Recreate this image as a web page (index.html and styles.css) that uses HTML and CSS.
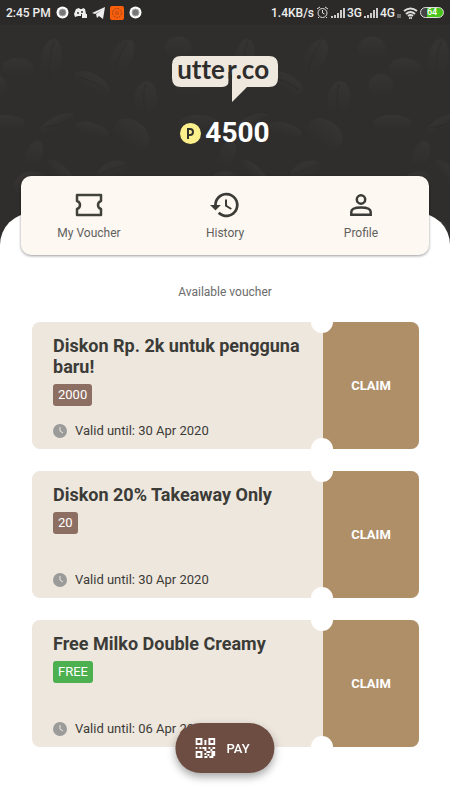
FILE: index.html
```
<!DOCTYPE html>
<html lang="id">
<head>
  <meta charset="UTF-8">
  <meta name="viewport" content="width=device-width, initial-scale=1.0">
  <title>utter.co</title>
  <link rel="stylesheet" href="styles.css">
</head>
<body>
<header class="hero">
  <svg class="beans" viewBox="0 0 450 225" preserveAspectRatio="xMidYMid slice" aria-hidden="true">
    <defs>
      <linearGradient id="shade" x1="0" y1="0" x2="0" y2="1">
        <stop offset="0" stop-color="#3c3b39"/>
        <stop offset="1" stop-color="#2e2d2b"/>
      </linearGradient>
      <pattern id="bean-pattern" width="170" height="160" patternUnits="userSpaceOnUse" patternTransform="translate(0 25)">
        <g fill="url(#shade)">
          <ellipse cx="14" cy="18" rx="12" ry="11"/>
          <ellipse cx="43" cy="35" rx="14" ry="9"/>
          <ellipse cx="72" cy="27" rx="9" ry="18" transform="rotate(10 72 27)"/>
          <ellipse cx="22" cy="51" rx="11" ry="11"/>
          <ellipse cx="108" cy="48" rx="17" ry="8" transform="rotate(28 108 48)"/>
          <ellipse cx="134" cy="25" rx="9" ry="17" transform="rotate(30 134 25)"/>
          <ellipse cx="155" cy="62" rx="10" ry="16" transform="rotate(8 155 62)"/>
          <ellipse cx="32" cy="83" rx="17" ry="7"/>
          <ellipse cx="78" cy="83" rx="16" ry="6" transform="rotate(-25 78 83)"/>
          <ellipse cx="108" cy="89" rx="15" ry="6" transform="rotate(15 108 89)"/>
          <ellipse cx="143" cy="93" rx="17" ry="12" transform="rotate(35 143 93)"/>
          <ellipse cx="57" cy="111" rx="7" ry="13" transform="rotate(20 57 111)"/>
          <ellipse cx="82" cy="128" rx="17" ry="6" transform="rotate(45 82 128)"/>
          <ellipse cx="126" cy="125" rx="14" ry="8" transform="rotate(-22 126 125)"/>
          <ellipse cx="53" cy="136" rx="14" ry="10" transform="rotate(-20 53 136)"/>
          <ellipse cx="12" cy="145" rx="12" ry="7"/>
        </g>
        <g fill="none" stroke="#2b2a28">
          <path d="M75 11q-5 15-5 31M96 43q12 2 24 11M139 12q-8 11-11 25M155 49q-3 12 0 25M65 87q12 0 26-9M114 129q12-6 25-9"/>
        </g>
      </pattern>
    </defs>
    <rect width="450" height="225" fill="url(#bean-pattern)"/>
  </svg>

  <div class="statusbar">
    <div class="status-group">
      <span>2:45 PM</span>
      <svg width="13" height="13" viewBox="0 0 13 13"><circle cx="6.500" cy="6.500" r="6" fill="#fff"/><circle cx="6.500" cy="6.500" r="3.500" fill="#777" stroke="#aaa"/></svg>
      <svg width="13" height="12" viewBox="0 0 13 12"><path d="M2 2l3-1 1 1h2l1-1 2 1 1 5H7v2H4l-3 1-1-3z" fill="#eee"/><circle cx="4" cy="6" r="1" fill="#333"/><circle cx="8" cy="5" r="1" fill="#333"/><path d="M8 7h5v4H8z" fill="#eee"/></svg>
      <svg width="13" height="12" viewBox="0 0 13 12"><path d="M0 6L13 0l-2 12-4-3-2 2-1-4 6-4-7 4z" fill="#eee"/></svg>
      <svg width="14" height="14" viewBox="0 0 14 14"><rect width="14" height="14" rx="2" fill="#f95f0b"/><circle cx="7" cy="7" r="4.500" fill="none" stroke="#99451b" stroke-dasharray="2 1"/><path d="M5 6h4M5 8h4" stroke="#b34a14"/></svg>
      <svg width="13" height="13" viewBox="0 0 13 13"><circle cx="6.500" cy="6.500" r="6" fill="#fff"/><circle cx="6.500" cy="6.500" r="3.500" fill="#777" stroke="#aaa"/></svg>
    </div>
    <div class="status-group status-right">
      <span>1.4KB/s</span>
      <svg width="13" height="13" viewBox="0 0 13 13" fill="none" stroke="#ddd"><circle cx="6.500" cy="7" r="4.500"/><path d="M1 3l3-2M12 3L9 1M6.500 4v3l2 1M3 11l-1 1M10 11l1 1"/></svg>
      <svg width="14" height="12" viewBox="0 0 14 12"><path d="M0 9h2v2H0zM3 8h2v3H3zM6 6h2v5H6zM9 3h2v8H9zM12 1h2v10h-2z" fill="#ccc"/></svg>
      <span>3G</span>
      <svg width="14" height="12" viewBox="0 0 14 12"><path d="M0 9h2v2H0zM3 8h2v3H3zM6 6h2v5H6zM9 3h2v8H9zM12 1h2v10h-2z" fill="#ccc"/></svg>
      <span>4G</span>
      <svg width="4" height="12" viewBox="0 0 4 12"><path d="M1 7v4M3 7v4" stroke="#aaa"/></svg>
      <svg width="15" height="12" viewBox="0 0 15 12" fill="none" stroke="#ddd" stroke-width="2"><path d="M1 4q6.500-5 13 0M3 7q4.500-4 9 0M5 9q2.500-2 5 0"/><circle cx="7.500" cy="11" r=".5"/></svg>
      <span class="battery">64</span>
    </div>
  </div>

  <svg class="logo" width="108" height="48" viewBox="0 0 108 48" role="img" aria-label="utter.co">
    <path d="M10 1h88q9 0 9 9v13q0 9-9 9H76L61 47V20h-3v5q0 7-7 7H10q-9 0-9-9V10q0-9 9-9z" fill="#eee8df"/>
    <path d="M59 17v16" stroke="#2e2d2b" stroke-width="3"/>
    <g class="logo-text">
      <text x="54" y="24" text-anchor="end">utte</text>
      <text x="56" y="24">r.co</text>
    </g>
  </svg>

  <div class="points">
    <svg width="21" height="21" viewBox="0 0 21 21" aria-hidden="true">
      <circle cx="10.500" cy="10.500" r="10.500" fill="#fcef8c"/>
      <path d="M8 16V6h2q3 0 3 3t-3 3H8" fill="none" stroke="#33322d" stroke-width="2"/>
    </svg>
    <span>4500</span>
  </div>
</header>

<main class="sheet">
  <nav class="menu">
    <a href="#voucher">
      <svg width="28" height="24" viewBox="0 0 28 24" fill="none" stroke="#42423c" stroke-width="2"><path d="M2 2h24v6q-3 1-3 4t3 4v6H2v-6q3-1 3-4T2 8z" stroke-width="2.500" stroke-linejoin="round"/></svg>
      <span>My Voucher</span>
    </a>
    <a href="#history">
      <svg width="30" height="28" viewBox="1 2 22 20" fill="#3b3b37"><path d="M13 3a9 9 0 0 0-9 9H1l3.890 3.890.07.14L9 12H6a7 7 0 1 1 2.060 4.940l-1.420 1.420A9 9 0 1 0 13 3zm-1 5v5l4.280 2.540.72-1.210-3.500-2.080V8z"/></svg>
      <span>History</span>
    </a>
    <a href="#profile">
      <svg width="22" height="22" viewBox="0 0 22 22" fill="none" stroke="#3b3b37" stroke-width="2.500"><circle cx="11" cy="5.500" r="4.200"/><path d="M1.300 20.700v-2.700q0-4.500 9.700-4.500t9.700 4.500v2.700z"/></svg>
      <span>Profile</span>
    </a>
  </nav>

  <p class="caption">Available voucher</p>

  <section class="vouchers" id="voucher">
    <article class="voucher">
      <div class="info">
        <h2>Diskon Rp. 2k untuk pengguna baru!</h2>
        <span class="price">2000</span>
        <p class="valid">
          <svg width="14" height="14" viewBox="0 0 14 14"><circle cx="7" cy="7" r="7" fill="#9b9b9a"/><path d="M7 3v4l3 2" fill="none" stroke="#eee8df"/></svg>
          Valid until: 30 Apr 2020
        </p>
      </div>
      <button class="claim">CLAIM</button>
    </article>

    <article class="voucher">
      <div class="info">
        <h2>Diskon 20% Takeaway Only</h2>
        <span class="price">20</span>
        <p class="valid">
          <svg width="14" height="14" viewBox="0 0 14 14"><circle cx="7" cy="7" r="7" fill="#9b9b9a"/><path d="M7 3v4l3 2" fill="none" stroke="#eee8df"/></svg>
          Valid until: 30 Apr 2020
        </p>
      </div>
      <button class="claim">CLAIM</button>
    </article>

    <article class="voucher">
      <div class="info">
        <h2>Free Milko Double Creamy</h2>
        <span class="price free">FREE</span>
        <p class="valid">
          <svg width="14" height="14" viewBox="0 0 14 14"><circle cx="7" cy="7" r="7" fill="#9b9b9a"/><path d="M7 3v4l3 2" fill="none" stroke="#eee8df"/></svg>
          Valid until: 06 Apr 2020
        </p>
      </div>
      <button class="claim">CLAIM</button>
    </article>
  </section>
</main>

<button class="pay">
  <svg width="20" height="20" viewBox="0 0 20 20" fill="#fff" aria-hidden="true">
    <path fill-rule="evenodd" d="M0 0h7v7H0zM2 2v3h3V2zM13 0h7v7h-7zM15 2v3h3V2zM0 13h7v7H0zM2 15v3h3v-3z"/>
    <path d="M9 2h2v5H9zM0 9h2v2H0zM4 9h2v2H4zM7 9h4v4H9v-2H7zM13 9h2v2h-2zM17 9h3v2h-3zM15 11h2v2h-2zM11 13h4v2h-4zM9 15h2v2H9zM16 13h4v5h-2v2h-4v-2h2zM12 16h2v2h-2zM9 18h3v2H9z"/>
  </svg>
  PAY
</button>
</body>
</html>
```
FILE: styles.css
```
* {
  box-sizing: border-box;
}

body {
  margin: 0;
  min-height: 100vh;
  background-color: #fff;
  font-family: Roboto, "Liberation Sans", sans-serif;
  color: #3b3b37;
}

button {
  border: none;
  font-family: inherit;
  cursor: pointer;
}

.hero {
  position: relative;
  height: 256px;
  background-color: #2f2e2c;
  display: flex;
  flex-direction: column;
  align-items: center;
}

.beans {
  position: absolute;
  top: 0;
  left: 0;
  width: 100%;
  height: 100%;
  opacity: 0.5;
}

.statusbar {
  position: relative;
  width: 100%;
  height: 25px;
  padding: 0 6px;
  background-color: #2b2a28;
  display: flex;
  justify-content: space-between;
  align-items: center;
  color: #eee;
  font-size: 12px;
  font-weight: 500;
}

.status-group {
  display: flex;
  align-items: center;
  gap: 5px;
}

.status-right {
  gap: 2px;
}

.battery {
  width: 24px;
  height: 11px;
  border: 1px solid #ddd;
  border-radius: 6px;
  background: linear-gradient(to right, #444 25%, #48c41d 25%);
  color: #fff;
  font-size: 9px;
  line-height: 9px;
  text-align: center;
}

.logo {
  position: relative;
  margin-top: 30px;
  overflow: visible;
}

.logo-text {
  font-family: Lato, sans-serif;
  font-size: 26px;
  font-weight: bold;
  font-variant-ligatures: none;
  fill: #2e2d2b;
}

.points {
  position: relative;
  margin-top: 14px;
  display: flex;
  align-items: center;
  gap: 4px;
  color: #fff;
  font-size: 28px;
  line-height: 32px;
  font-weight: bold;
}

.sheet {
  position: relative;
  margin-top: -43px;
  padding: 0 21px 53px;
  background-color: #fff;
  border-radius: 32px 32px 0 0;
  display: flow-root;
}

.menu {
  margin-top: -37px;
  height: 79px;
  background-color: #fef8f2;
  border-radius: 10px;
  box-shadow: 0 1px 3px rgba(0, 0, 0, 0.4);
  display: grid;
  grid-template-columns: repeat(3, 1fr);
}

.menu a {
  padding-top: 15px;
  display: flex;
  flex-direction: column;
  align-items: center;
  gap: 6px;
  color: #60605d;
  font-size: 12px;
  line-height: 16px;
  text-decoration: none;
}

.menu svg {
  height: 28px;
}

.caption {
  margin: 29px 0 22px;
  color: #6b6b6b;
  font-size: 12px;
  line-height: 16px;
  text-align: center;
}

.vouchers {
  margin: 0 10px 0 11px;
  display: flex;
  flex-direction: column;
  gap: 22px;
}

.voucher {
  position: relative;
  min-height: 127px;
  border-radius: 8px;
  background-color: #eee7de;
  display: flex;
  overflow: hidden;
}

/* ticket notches on the tear line */
.voucher::before,
.voucher::after {
  content: "";
  position: absolute;
  right: 86px;
  width: 22px;
  height: 22px;
  border-radius: 50%;
  background-color: #fff;
}

.voucher::before {
  top: -11px;
}

.voucher::after {
  bottom: -11px;
}

.info {
  flex: 1;
  padding: 13px 12px 10px 21px;
  display: flex;
  flex-direction: column;
  align-items: flex-start;
}

.info h2 {
  margin: 0 0 7px;
  font-size: 18px;
  line-height: 21px;
}

.price {
  padding: 0 5px;
  border-radius: 3px;
  background-color: #8d6e63;
  color: #fff;
  font-size: 13px;
  line-height: 22px;
}

.free {
  background-color: #4caf50;
}

.valid {
  margin: auto 0 0;
  display: flex;
  align-items: center;
  gap: 8px;
  font-size: 13px;
  line-height: 16px;
}

.claim {
  width: 96px;
  background-color: #af8f68;
  color: #fff;
  font-size: 13px;
  font-weight: bold;
}

.pay {
  position: fixed;
  bottom: 27px;
  left: 50%;
  transform: translateX(-50%);
  height: 50px;
  padding: 0 25px 0 20px;
  border-radius: 25px;
  background-color: #6d4c41;
  box-shadow: 0 4px 8px rgba(0, 0, 0, 0.35);
  color: #fff;
  display: flex;
  align-items: center;
  gap: 11px;
  font-size: 13px;
  font-weight: 500;
}
```
